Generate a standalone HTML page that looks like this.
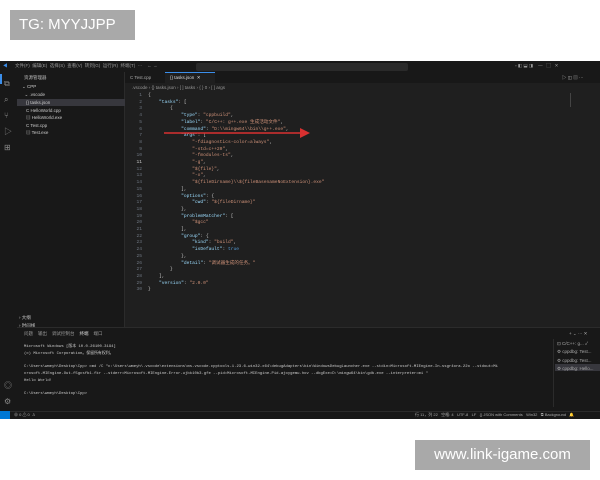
<!DOCTYPE html>
<html><head><meta charset="utf-8"><style>
*{margin:0;padding:0;box-sizing:border-box}
body{width:600px;height:480px;background:#fff;position:relative;overflow:hidden;font-family:"Liberation Sans","Noto Sans CJK SC",sans-serif}
.a{position:absolute}
.vs{left:0;top:61px;width:600px;height:358px;background:#1f1f1f}
.t{font-family:"Liberation Mono",monospace;font-size:4.6px;white-space:pre;color:#ccc}
.ln{color:#6e7681;text-align:right;width:14px;left:128px}
.k{color:#9cdcfe}.s{color:#ce9178}.b{color:#569cd6}
.sm{font-size:4.5px;color:#aaa;white-space:nowrap}
</style></head><body>
<div class="a" style="left:10px;top:10px;width:125px;height:30px;background:#a9a9a9;color:#fff;font-size:15px;line-height:30px;padding-left:9px">TG: MYYJJPP</div>
<div class="a vs"></div>
<!-- title bar -->
<div class="a" style="left:0;top:61px;width:600px;height:11px;background:#181818"></div>
<div class="a sm" style="left:3px;top:63px;color:#3b8eea">◀</div>
<div class="a sm" style="left:15px;top:63px;color:#999">文件(F)&nbsp;&nbsp;编辑(E)&nbsp;&nbsp;选择(S)&nbsp;&nbsp;查看(V)&nbsp;&nbsp;转到(G)&nbsp;&nbsp;运行(R)&nbsp;&nbsp;终端(T)&nbsp;&nbsp;···&nbsp;&nbsp;&nbsp;&nbsp;←&nbsp;→</div>
<div class="a" style="left:196px;top:63px;width:212px;height:8px;background:#2a2a2a;border-radius:2px"></div>
<div class="a sm" style="left:515px;top:63px;color:#999">▫ ◧ ⬓ ◨&nbsp;&nbsp;&nbsp;&nbsp;—&nbsp;&nbsp;&nbsp;▢&nbsp;&nbsp;&nbsp;✕</div>
<!-- activity bar -->
<div class="a" style="left:0;top:72px;width:17px;height:339px;background:#181818"></div>
<div class="a" style="left:0;top:74px;width:1.5px;height:10px;background:#3b8eea"></div>
<div class="a sm" style="left:4px;top:76px;font-size:8px;line-height:16px;color:#888">⧉<br>⌕<br>⑂<br>▷<br>⊞</div>
<div class="a sm" style="left:4px;top:378px;font-size:8px;line-height:16px;color:#888">◎<br>⚙</div>
<!-- sidebar -->
<div class="a" style="left:17px;top:72px;width:108px;height:255px;background:#181818;border-right:1px solid #2b2b2b"></div>
<div class="a sm" style="left:24px;top:75px;color:#bbb">资源管理器</div>
<div class="a sm" style="left:22px;top:83px;line-height:7.5px;color:#ccc">⌄ CPP<br>&nbsp;&nbsp;⌄ .vscode</div>
<div class="a" style="left:17px;top:99px;width:108px;height:7px;background:#37373d"></div>
<div class="a sm" style="left:26px;top:99px;line-height:7.6px;color:#ccc">{} tasks.json<br>C HelloWorld.cpp<br>▤ HelloWorld.exe<br>C Test.cpp<br>▤ Test.exe</div>
<div class="a sm" style="left:19px;top:314px;line-height:8px;color:#ccc">› 大纲<br>› 时间线</div>
<!-- tabs -->
<div class="a" style="left:125px;top:72px;width:475px;height:11px;background:#181818"></div>
<div class="a sm" style="left:130px;top:75px">C Test.cpp</div>
<div class="a" style="left:165px;top:72px;width:50px;height:11px;background:#1f1f1f;border-top:1px solid #3b8eea"></div>
<div class="a sm" style="left:170px;top:75px;color:#ddd">{} tasks.json&nbsp;&nbsp;✕</div>
<div class="a sm" style="left:562px;top:75px;color:#bbb">▷ ◫ ▥ ···</div>
<div class="a sm" style="left:132px;top:85px;color:#999">.vscode › {} tasks.json › [ ] tasks › { } 0 › [ ] args</div>
<!-- code -->
<div class="a t ln" style="top:93px;line-height:6.7px">1
2
3
4
5
6
7
8
9
10
<span style="color:#ccc">11</span>
12
13
14
15
16
17
18
19
20
21
22
23
24
25
26
27
28
29
30</div>
<div class="a t" style="left:148px;top:93px;line-height:6.7px">{
    <span class="k">"tasks"</span>: [
        {
            <span class="k">"type"</span>: <span class="s">"cppbuild"</span>,
            <span class="k">"label"</span>: <span class="s">"C/C++: g++.exe 生成活动文件"</span>,
            <span class="k">"command"</span>: <span class="s">"D:\\mingw64\\bin\\g++.exe"</span>,
            <span class="k">"args"</span>: [
                <span class="s">"-fdiagnostics-color=always"</span>,
                <span class="s">"-std=c++20"</span>,
                <span class="s">"-fmodules-ts"</span>,
                <span class="s">"-g"</span>,
                <span class="s">"${file}"</span>,
                <span class="s">"-o"</span>,
                <span class="s">"${fileDirname}\\${fileBasenameNoExtension}.exe"</span>
            ],
            <span class="k">"options"</span>: {
                <span class="k">"cwd"</span>: <span class="s">"${fileDirname}"</span>
            },
            <span class="k">"problemMatcher"</span>: [
                <span class="s">"$gcc"</span>
            ],
            <span class="k">"group"</span>: {
                <span class="k">"kind"</span>: <span class="s">"build"</span>,
                <span class="k">"isDefault"</span>: <span class="b">true</span>
            },
            <span class="k">"detail"</span>: <span class="s">"调试器生成的任务。"</span>
        }
    ],
    <span class="k">"version"</span>: <span class="s">"2.0.0"</span>
}</div>
<!-- red arrow -->
<svg class="a" style="left:160px;top:125px" width="155" height="16"><line x1="4" y1="8" x2="142" y2="8" stroke="#d93030" stroke-width="1.6"/><polygon points="140,3 150,8 140,13" fill="#d93030"/></svg>
<!-- minimap -->
<div class="a" style="left:570px;top:93px;width:12px;height:14px;border-left:1px solid #444"></div>
<!-- panel -->
<div class="a" style="left:17px;top:327px;width:583px;height:84px;background:#181818;border-top:1px solid #2b2b2b"></div>
<div class="a sm" style="left:24px;top:331px;color:#999">问题&nbsp;&nbsp;&nbsp;&nbsp;输出&nbsp;&nbsp;&nbsp;&nbsp;调试控制台&nbsp;&nbsp;&nbsp;&nbsp;<span style="color:#ddd">终端</span>&nbsp;&nbsp;&nbsp;&nbsp;端口</div>
<div class="a sm" style="left:569px;top:331px">+ ⌄ ··· ✕</div>
<div class="a t" style="left:24px;top:344px;font-size:3.9px;line-height:6.7px;color:#ccc">Microsoft Windows [版本 10.0.26100.3194]
(c) Microsoft Corporation。保留所有权利。

C:\Users\wmeyh\Desktop\Cpp> cmd /C "c:\Users\wmeyh\.vscode\extensions\ms-vscode.cpptools-1.23.6-win32-x64\debugAdapters\bin\WindowsDebugLauncher.exe --stdin=Microsoft-MIEngine-In-ssgr4ora.22o --stdout=Mi
crosoft-MIEngine-Out-f5gcsfb1.fkr --stderr=Microsoft-MIEngine-Error-ujbk10b3.gfe --pid=Microsoft-MIEngine-Pid-ajoygemu.hov --dbgExe=D:\mingw64\bin\gdb.exe --interpreter=mi "
Hello World!

C:\Users\wmeyh\Desktop\Cpp></div>
<div class="a" style="left:553px;top:339px;width:1px;height:68px;background:#2b2b2b"></div>
<div class="a" style="left:555px;top:364px;width:45px;height:7px;background:#37373d"></div>
<div class="a sm" style="left:557px;top:340px;line-height:8.3px">⊡ C/C++: g... ✓<br>⚙ cppdbg: Test...<br>⚙ cppdbg: Test...<br>⚙ cppdbg: Hello...</div>
<!-- status bar -->
<div class="a" style="left:0;top:411px;width:600px;height:8px;background:#181818;border-top:1px solid #2b2b2b"></div>
<div class="a" style="left:0;top:411px;width:10px;height:8px;background:#0078d4"></div>
<div class="a sm" style="left:14px;top:412px;font-size:4px">⊗ 0 ⚠ 0&nbsp;&nbsp;♙</div>
<div class="a sm" style="left:415px;top:412px;font-size:4px">行 11，列 22&nbsp;&nbsp;&nbsp;空格: 4&nbsp;&nbsp;&nbsp;UTF-8&nbsp;&nbsp;&nbsp;LF&nbsp;&nbsp;&nbsp;{} JSON with Comments&nbsp;&nbsp;&nbsp;Win32&nbsp;&nbsp;&nbsp;⧉ Background&nbsp;&nbsp;&nbsp;🔔</div>
<div class="a" style="left:415px;top:440px;width:175px;height:30px;background:#a9a9a9;color:#fff;font-size:15px;line-height:30px;text-align:center">www.link-igame.com</div>
</body></html>
